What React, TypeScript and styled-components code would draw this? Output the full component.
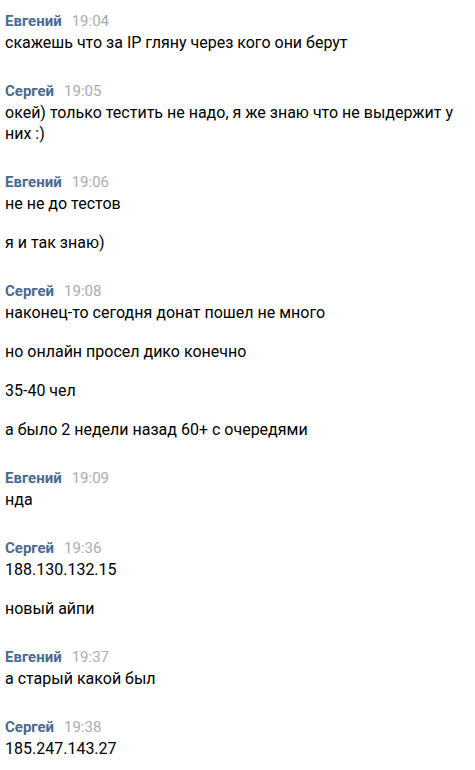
import React from "react";
import styled, { createGlobalStyle } from "styled-components";

const GlobalStyle = createGlobalStyle`
  body {
    margin: 0;
    background: #ffffff;
    font-family: Roboto, "Liberation Sans", Arial, sans-serif;
  }
`;

const History = styled.div`
  padding: 11px 12px 0 5px;
  display: flex;
  flex-direction: column;
  gap: 28px;
`;

const Group = styled.div`
  display: flex;
  flex-direction: column;
`;

const Head = styled.div`
  display: flex;
  align-items: baseline;
  gap: 10px;
  height: 20px;
  line-height: 20px;
  margin-bottom: 1px;
`;

const Author = styled.span`
  font-size: 15px;
  font-weight: 700;
  color: #4a6a90;
`;

const Time = styled.span`
  font-size: 15px;
  color: #a8adb3;
`;

const Text = styled.div`
  font-size: 16px;
  line-height: 21px;
  color: #000000;
  & + & {
    margin-top: 18px;
  }
`;

type Msg = { author: string; time: string; lines: string[] };

const messages: Msg[] = [
  { author: "Евгений", time: "19:04", lines: ["скажешь что за IP гляну через кого они берут"] },
  {
    author: "Сергей",
    time: "19:05",
    lines: ["окей) только тестить не надо, я же знаю что не выдержит у них :)"],
  },
  { author: "Евгений", time: "19:06", lines: ["не не до тестов", "я и так знаю)"] },
  {
    author: "Сергей",
    time: "19:08",
    lines: [
      "наконец-то сегодня донат пошел не много",
      "но онлайн просел дико конечно",
      "35-40 чел",
      "а было 2 недели назад 60+ с очередями",
    ],
  },
  { author: "Евгений", time: "19:09", lines: ["нда"] },
  { author: "Сергей", time: "19:36", lines: ["188.130.132.15", "новый айпи"] },
  { author: "Евгений", time: "19:37", lines: ["а старый какой был"] },
  { author: "Сергей", time: "19:38", lines: ["185.247.143.27"] },
];

export default function App() {
  return (
    <>
      <GlobalStyle />
      <History>
        {messages.map((m, i) => (
          <Group key={i}>
            <Head>
              <Author>{m.author}</Author>
              <Time>{m.time}</Time>
            </Head>
            {m.lines.map((l, j) => (
              <Text key={j}>{l}</Text>
            ))}
          </Group>
        ))}
      </History>
    </>
  );
}
